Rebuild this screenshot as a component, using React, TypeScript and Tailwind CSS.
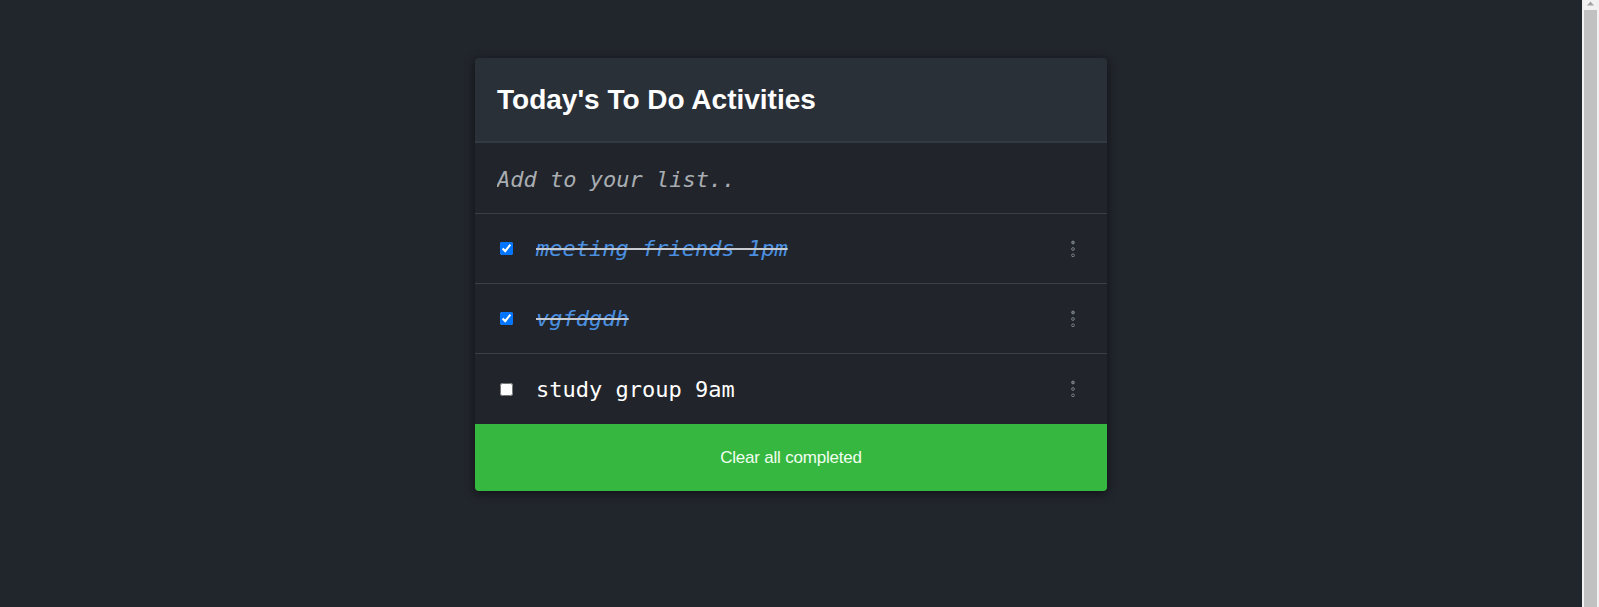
import React from 'react';

const items = [
  { text: 'meeting friends 1pm', done: true },
  { text: 'vgfdgdh', done: true },
  { text: 'study group 9am', done: false },
];

function Dots() {
  return (
    <svg width="6" height="18" viewBox="0 0 6 18" className="shrink-0">
      <circle cx="3" cy="2.5" r="1.4" fill="#5c636b" stroke="#8a9098" strokeWidth="0.8" />
      <circle cx="3" cy="9" r="1.4" fill="none" stroke="#8a9098" strokeWidth="0.8" />
      <circle cx="3" cy="15.3" r="1.4" fill="none" stroke="#8a9098" strokeWidth="0.8" />
    </svg>
  );
}

// browser's classic scrollbar, as seen in the screenshot
function ScrollStrip() {
  return (
    <div className="w-[17px] shrink-0 bg-[#f1f1f1] flex flex-col items-center">
      <svg width="9" height="10" viewBox="0 0 9 10" className="shrink-0">
        <path d="M4.5 1.5 L8 5.5 L1 5.5 Z" fill="#a3a3a3" />
      </svg>
      <div className="flex-1 w-[13px] bg-[#c1c1c1]" />
    </div>
  );
}

export default function App() {
  return (
    <div className="h-[607px] flex bg-[#21252c] overflow-hidden">
      <div className="flex-1 pt-[58px] flex justify-center items-start">
        <div className="w-[632px] rounded-[4px] bg-[#21252b] shadow-[0_2px_10px_rgba(0,0,0,0.55)] overflow-hidden">
          {/* header */}
          <div className="h-[85px] bg-[#2a3038] border-b-2 border-[#323a42] flex items-center px-[22px] pt-[1px]">
            <h1 className="text-[28px] font-bold text-white font-['Liberation_Sans',Arial,sans-serif]">
              Today's To Do Activities
            </h1>
          </div>

          {/* input */}
          <div className="h-[71px] border-b border-[#3a4048] flex items-center px-[22px] pt-[2px]">
            <input
              placeholder="Add to your list.."
              className="w-full bg-transparent outline-none italic text-[22px] text-white placeholder:text-[#a9adb2] font-['DejaVu_Sans_Mono',monospace]"
            />
          </div>

          {/* list */}
          {items.map((it, i) => (
            <div
              key={i}
              className={`h-[70px] flex items-center pl-[25px] pr-[31px] ${i < items.length - 1 ? 'border-b border-[#3a4048]' : ''}`}
            >
              <input
                type="checkbox"
                defaultChecked={it.done}
                className="w-[13px] h-[13px] m-0 accent-[#0075ff]"
              />
              <span
                className={`ml-[23px] flex-1 text-[22px] font-['DejaVu_Sans_Mono',monospace] ${
                  it.done ? 'italic line-through text-[#4a8fe0] decoration-[#c8ccd0]' : 'text-white'
                }`}
              >
                {it.text}
              </span>
              <Dots />
            </div>
          ))}

          {/* footer */}
          <button className="w-full h-[67px] bg-[#36b73f] text-[#f0fff0] text-[17px] font-['Liberation_Sans',Arial,sans-serif] tracking-[-0.2px]">
            Clear all completed
          </button>
        </div>
      </div>
      <ScrollStrip />
    </div>
  );
}
